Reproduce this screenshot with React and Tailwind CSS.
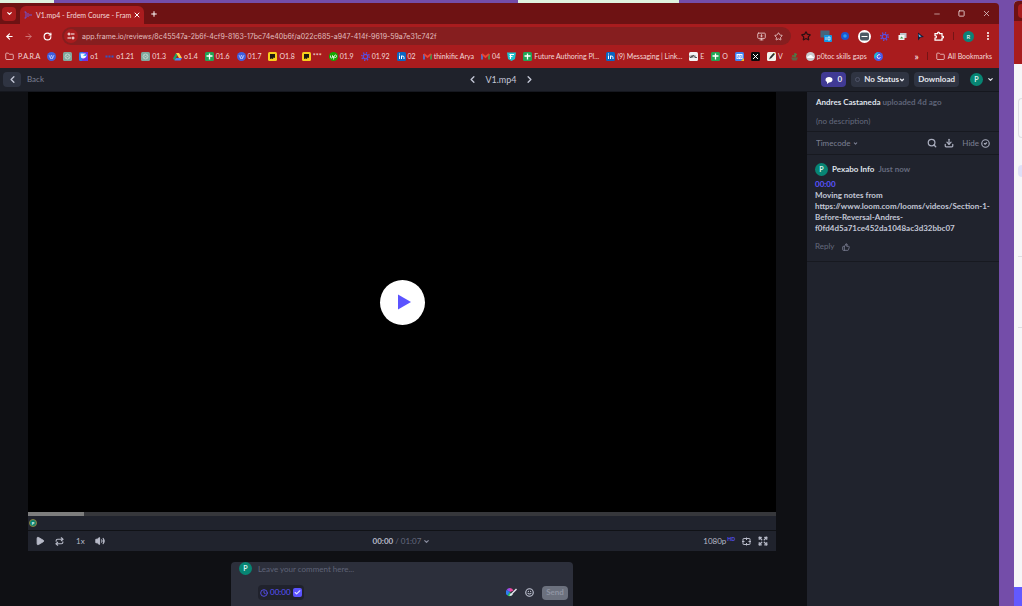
import {
  ArrowLeft,
  ArrowRight,
  Check,
  ChevronDown,
  ChevronLeft,
  ChevronRight,
  CircleCheck,
  Clock,
  Download,
  EllipsisVertical,
  Expand,
  Folder,
  Minus,
  MonitorDown,
  Play,
  Plus,
  Repeat,
  RotateCw,
  Search,
  Smile,
  Square,
  Star,
  ThumbsUp,
  Volume2,
  X,
} from 'lucide-react'

/* ---------- Favicons ---------- */

function Disc({ fill, children }) {
  return (
    <svg viewBox="0 0 18 18" className="size-[9px] shrink-0">
      <circle cx="9" cy="9" r="9" fill={fill} />
      {children}
    </svg>
  )
}

function Tile({ fill, children }) {
  return (
    <svg viewBox="0 0 18 18" className="size-[9px] shrink-0">
      <rect width="18" height="18" rx="3" fill={fill} />
      {children}
    </svg>
  )
}

function WaveDisc() {
  return (
    <Disc fill="#3f5fe0">
      <path d="M4 6l2.5 6L9 6l2.5 6L14 6M6 13h6" stroke="#c9d3ff" strokeWidth="1.4" fill="none" />
    </Disc>
  )
}

function ChatTile() {
  return (
    <Tile fill="#7fa99d">
      <circle cx="9" cy="9" r="5" stroke="#c6d9d3" strokeWidth="1.8" fill="none" />
      <path d="M6 7l6 4M6 11l6-4" stroke="#c6d9d3" strokeWidth="1.2" />
    </Tile>
  )
}

function SheetTile() {
  return (
    <Tile fill="#23a455">
      <path d="M9 3v12M3 8h12" stroke="#fff" strokeWidth="2.6" />
    </Tile>
  )
}

function BrainTile() {
  return (
    <Tile fill="#f7ce1d">
      <path d="M4 4h10v8l-3-1-1 3-3-1-3 1z" fill="#1d1a12" />
    </Tile>
  )
}

function DropTile() {
  return (
    <Tile fill="#2f7bf0">
      <path d="M9 0h9v18H6z" fill="#6b35e8" />
      <path d="M3 3h10q4 4 0 8-5 4-9 0z" fill="#f2f7ff" />
      <path d="M8 7l6-4v5z" fill="#18a4f0" />
    </Tile>
  )
}

function Dots() {
  return (
    <svg viewBox="0 0 18 18" className="size-[9px] shrink-0">
      <path d="M1 9h4M7 9h4M13 9h4" stroke="#3157c4" strokeWidth="4" />
    </svg>
  )
}

function Drive() {
  return (
    <svg viewBox="0 0 18 18" className="size-[9px] shrink-0">
      <path d="M6 2L0 13l3 4L9 6z" fill="#1fa463" />
      <path d="M6 2h6l6 10h-6z" fill="#ffd04b" />
      <path d="M3 17l3-5h12l-3 5z" fill="#4688f4" />
    </svg>
  )
}

function UpDisc() {
  return (
    <Disc fill="#14a800">
      <path d="M3 7v3q0 2 2 2t2-2V7l3 5M9 15l1-6q1-3 3-3t2 2.5-2 2.5-3-2" stroke="#fff" strokeWidth="1.6" fill="none" />
    </Disc>
  )
}

function Gear() {
  return (
    <svg viewBox="0 0 18 18" className="size-[9px] shrink-0">
      <circle cx="9" cy="9" r="4.5" stroke="#5a4fe0" strokeWidth="2.5" fill="none" />
      <circle cx="9" cy="9" r="7.5" stroke="#5a4fe0" strokeWidth="3" strokeDasharray="2.5 3.39" fill="none" />
    </svg>
  )
}

function LinkedIn() {
  return (
    <Tile fill="#0a66c2">
      <path d="M5 7v7M5 3v2M9 14V7M9 11q0-3 2.5-3T14 11v3" stroke="#fff" strokeWidth="2" fill="none" />
    </Tile>
  )
}

function Gmail() {
  return (
    <svg viewBox="0 0 18 18" className="size-[9px] shrink-0">
      <path d="M2 15V4" stroke="#4285f4" strokeWidth="3" />
      <path d="M16 15V4" stroke="#34a853" strokeWidth="3" />
      <path d="M2 4l7 6 7-6" stroke="#ea4335" strokeWidth="3.5" fill="none" />
    </svg>
  )
}

function TealBadge() {
  return (
    <svg viewBox="0 0 18 18" className="size-[9px] shrink-0">
      <path d="M0 1h18l-2 13-7 4-7-4z" fill="#1fc3cf" />
      <path d="M5 5h9M5 9h6M7 5v9" stroke="#fff" strokeWidth="2.2" />
    </svg>
  )
}

function WideTile() {
  return (
    <Tile fill="#f3f3f3">
      <path d="M2 7v4h3V7M7 11V7h3v4M12 7v4h4" stroke="#333" strokeWidth="1.6" fill="none" />
    </Tile>
  )
}

function Calendar() {
  return (
    <Tile fill="#3f83f2">
      <rect x="3" y="4" width="12" height="10" fill="#fff" />
      <path d="M12 18h6v-6z" fill="#f4bd1c" />
      <path d="M5 7h3v2.5H5V12h3M10 7h3v5h-3z" stroke="#3f83f2" strokeWidth="1.2" fill="none" />
    </Tile>
  )
}

function XTile() {
  return (
    <Tile fill="#0b0b0b">
      <path d="M4 4l10 10M14 4L4 14" stroke="#fff" strokeWidth="2" />
    </Tile>
  )
}

function Pencil() {
  return (
    <Tile fill="#f2f2ec">
      <path d="M4 15l2-5 7-8 3 2-7 8z" fill="#2c2c2c" />
      <path d="M13 2l3 2 1-2z" fill="#e5b91c" />
    </Tile>
  )
}

function Plant() {
  return (
    <svg viewBox="0 0 18 18" className="size-[9px] shrink-0">
      <path d="M10 11V2M10 5h4M4 8h8" stroke="#4c7a46" strokeWidth="3" fill="none" />
      <path d="M2 11h14l-3 6H5z" fill="#5f6044" />
    </svg>
  )
}

function Cloud() {
  return (
    <Disc fill="#c9cdd0">
      <path d="M2 12q0-4 4-4 1-3 4-2t3 3q3 0 3 3z" fill="#fff" />
    </Disc>
  )
}

function CanvaDisc() {
  return (
    <Disc fill="#4a5ae8">
      <path d="M9 0a9 9 0 0 0-7 14z" fill="#18bfce" />
      <path d="M12.5 6.5Q11 4 8 6t-1 6q3 2 6-1" stroke="#fff" strokeWidth="1.8" fill="none" />
    </Disc>
  )
}

const BOOKMARKS = [
  { icon: WaveDisc },
  { icon: ChatTile },
  { icon: DropTile, label: 'o1' },
  { icon: Dots, label: 'o1.21' },
  { icon: ChatTile, label: '01.3' },
  { icon: Drive, label: 'o1.4' },
  { icon: SheetTile, label: '01.6' },
  { icon: WaveDisc, label: '01.7' },
  { icon: BrainTile, label: 'O1.8' },
  { icon: BrainTile, label: '***' },
  { icon: UpDisc, label: '01.9' },
  { icon: Gear, label: '01.92' },
  { icon: LinkedIn, label: '02' },
  { icon: Gmail, label: 'thinkific Arya' },
  { icon: Gmail, label: '04' },
  { icon: TealBadge },
  { icon: SheetTile, label: 'Future Authoring Pl...' },
  { icon: LinkedIn, label: '(9) Messaging | Link...' },
  { icon: WideTile, label: 'E' },
  { icon: SheetTile, label: 'O' },
  { icon: Calendar },
  { icon: XTile },
  { icon: Pencil, label: 'V' },
  { icon: Plant },
  { icon: Cloud, label: 'p0toc skills gaps' },
  { icon: CanvaDisc },
]

/* ---------- Browser chrome ---------- */

function TabStrip() {
  return (
    <div className="flex h-[21px] items-center bg-[#6e1213] pl-0.5">
      <button aria-label="Search tabs" className="flex h-3.5 w-3.5 items-center justify-center rounded bg-[#a91c1e] text-white">
        <ChevronDown size={7} strokeWidth={4} />
      </button>
      <div className="ml-1 flex h-[18px] w-[124px] items-center self-end rounded-t-md bg-[#a91c1e] pl-1 text-[#f3d9d9]">
        <svg viewBox="0 0 16 16" className="size-2 shrink-0" fill="none" stroke="#6b55dc" strokeWidth="2">
          <path d="M1 2h3v12H1M8 4v8M12 6v4M15 7v2" />
        </svg>
        <span className="ml-1 w-[95px] whitespace-nowrap">V1.mp4 - Erdem Course - Fram</span>
        <button aria-label="Close tab" className="ml-0.5 text-white">
          <X size={8} strokeWidth={3} />
        </button>
      </div>
      <button aria-label="New tab" className="ml-1.5 text-white">
        <Plus size={8} strokeWidth={3} />
      </button>
      <div className="ml-auto flex items-center gap-[17px] pr-2 text-[#e8d3d3]">
        <button aria-label="Minimize"><Minus size={8} /></button>
        <button aria-label="Restore"><Square size={7} strokeWidth={3} /></button>
        <button aria-label="Close window"><X size={9} /></button>
      </div>
    </div>
  )
}

function Extensions() {
  return (
    <div className="flex items-center gap-[9px] pr-1.5">
      <Star size={10} strokeWidth={3} className="text-[#2b1013]" />
      <svg viewBox="0 0 24 24" className="size-3">
        <rect x="1" y="1" width="18" height="14" fill="#46657a" />
        <rect x="8" y="10" width="16" height="14" rx="2" fill="#1499e6" />
        <path d="M12 14v6M16 14v6h4v-6z" stroke="#fff" strokeWidth="1.5" fill="none" />
      </svg>
      <svg viewBox="0 0 18 18" className="size-2">
        <circle cx="9" cy="9" r="9" fill="#1e55cf" />
        <circle cx="9" cy="9" r="4" fill="#2a9bf0" />
      </svg>
      <svg viewBox="0 0 26 26" className="size-[13px]">
        <circle cx="13" cy="13" r="13" fill="#fff" />
        <rect x="4" y="5" width="18" height="16" rx="4" fill="#4a5964" />
        <path d="M7 13h12" stroke="#fff" strokeWidth="2" />
      </svg>
      <Gear />
      <svg viewBox="0 0 18 18" className="size-[9px]">
        <path d="M4 2h13v10H4z" fill="#bfc3c8" />
        <path d="M1 6h12v10H1z" fill="#f4f4f4" />
        <path d="M4 13l3-4 4 4z" fill="#3f9b55" />
      </svg>
      <svg viewBox="0 0 18 18" className="size-[9px]">
        <path d="M4 1l12 9-7 1-5 6z" fill="#141d36" />
        <path d="M5 4l6 5-5 1z" fill="#6bb7e8" />
      </svg>
      <svg viewBox="0 0 20 20" className="size-2.5" fill="none" stroke="#fff" strokeWidth="2.5">
        <path d="M2 5h5q0-3 2-3t2 3h5v5q3 0 3 2t-3 2v4H2v-4q3 0 3-2.5T2 9z" />
      </svg>
      <span className="h-2 w-px bg-[#741416]" />
      <span className="flex size-[11px] items-center justify-center rounded-full bg-[#0c8277] text-[6px] text-white">R</span>
      <button aria-label="Menu" className="text-white"><EllipsisVertical size={10} strokeWidth={3} /></button>
    </div>
  )
}

function Toolbar() {
  return (
    <div className="flex h-6 items-center bg-[#a91c1e] pl-[5px] text-white">
      <button aria-label="Back in history"><ArrowLeft size={9} strokeWidth={3} /></button>
      <button aria-label="Forward in history" className="ml-2.5 text-[#d07a7b]"><ArrowRight size={9} strokeWidth={2.5} /></button>
      <button aria-label="Reload" className="ml-2.5"><RotateCw size={9} strokeWidth={3} /></button>
      <div className="ml-2.5 flex h-[18px] flex-1 items-center rounded-full bg-[#861e1f] pr-2 pl-0.5">
        <span className="flex size-3.5 shrink-0 items-center justify-center rounded-full bg-[#a91c1e]">
          <svg viewBox="0 0 16 16" className="size-2" fill="none" stroke="#fff" strokeWidth="2">
            <circle cx="4" cy="4" r="2" />
            <path d="M8 4h7M1 12h7" />
            <circle cx="12" cy="12" r="2" />
          </svg>
        </span>
        <input
          aria-label="Address"
          readOnly
          value="app.frame.io/reviews/8c45547a-2b6f-4cf9-8163-17bc74e40b6f/a022c685-a947-414f-9619-59a7e31c742f"
          className="ml-1 h-3 min-w-0 flex-1 bg-transparent font-['Inter',sans-serif] text-[#e2bfbf] outline-none"
        />
        <MonitorDown size={9} strokeWidth={2.5} className="text-[#e2bfbf]" />
        <Star size={9} strokeWidth={2.5} className="ml-2 text-[#e2bfbf]" />
      </div>
      <div className="ml-2.5">
        <Extensions />
      </div>
    </div>
  )
}

function BookmarksBar() {
  return (
    <nav className="flex h-5 items-center bg-[#a91c1e] pr-[7px] pb-1 pl-[5px] text-[#f3d9d9]">
      <div className="flex items-center gap-[7px]">
        <a href="#para" className="flex items-center gap-1 whitespace-nowrap">
          <Folder size={9} />
          P.A.R.A
        </a>
        {BOOKMARKS.map(({ icon: Icon, label }, i) => (
          <a key={i} href={`#bookmark-${i}`} aria-label={label || 'Bookmark'} className="flex items-center gap-0.5 whitespace-nowrap">
            <Icon />
            {label}
          </a>
        ))}
      </div>
      <button aria-label="More bookmarks" className="ml-auto text-[10px] leading-none text-white">»</button>
      <span className="mx-2 h-2 w-px bg-[#741416]" />
      <a href="#all" className="flex items-center gap-[3px] whitespace-nowrap">
        <Folder size={9} />
        All Bookmarks
      </a>
    </nav>
  )
}

/* ---------- Review app ---------- */

function Avatar() {
  return (
    <span className="flex size-[13px] shrink-0 items-center justify-center rounded-full bg-[#078573] text-[7px] font-bold text-[#d9f0ec]">
      P
    </span>
  )
}

function ReviewHeader() {
  return (
    <header className="grid h-6 shrink-0 grid-cols-[1fr_auto_1fr] items-center border-b border-[#15171e] bg-[#1f222b] pl-[3px]">
      <div className="flex items-center gap-1.5 text-[#7c8094]">
        <button aria-label="Go back" className="flex h-[15px] w-[18px] items-center justify-center rounded-sm bg-[#2f3442] text-[#c3c7d6]">
          <ChevronLeft size={11} strokeWidth={3} />
        </button>
        <a href="#back">Back</a>
      </div>
      <div className="flex items-center gap-[7px] text-[#c3c7d6]">
        <button aria-label="Previous asset"><ChevronLeft size={11} strokeWidth={3} /></button>
        <h1 className="text-[9px]">V1.mp4</h1>
        <button aria-label="Next asset"><ChevronRight size={11} strokeWidth={3} /></button>
      </div>
      <div className="flex items-center justify-end gap-[5px] pr-[5px] font-bold text-[#e6e8f0]">
        <button aria-label="Comments" className="flex h-[15px] w-[25px] items-center justify-center gap-1 rounded-sm bg-[#403a94]">
          <svg viewBox="0 0 16 16" className="size-2">
            <path d="M8 2c4 0 7 2 7 5.5S12 13 8 13l-4 3 0-4C2 11 1 9.5 1 7.5 1 4 4 2 8 2z" fill="#fff" />
          </svg>
          0
        </button>
        <label className="flex h-[15px] items-center rounded-sm bg-[#2f3442] px-1">
          <span className="mr-1 size-[5px] rounded-full border border-[#50556a]" />
          <select aria-label="Status" className="appearance-none">
            <option>No Status</option>
          </select>
          <ChevronDown size={6} strokeWidth={5} />
        </label>
        <button className="h-[15px] rounded-sm bg-[#2f3442] px-1">Download</button>
        <button aria-label="Account" className="ml-1.5 flex items-center gap-1">
          <Avatar />
          <ChevronDown size={7} strokeWidth={4} />
        </button>
      </div>
    </header>
  )
}

function Player() {
  return (
    <section className="flex min-h-0 flex-1 flex-col">
      <div className="flex min-h-0 flex-1 items-center justify-center bg-black">
        <button aria-label="Play video" className="flex size-[45px] items-center justify-center rounded-full bg-white">
          <svg viewBox="0 0 14 16" className="ml-1 h-4 w-3.5">
            <path d="M1 0.5l13 7.5-13 7.5z" fill="#5b53ff" />
          </svg>
        </button>
      </div>
      <div className="h-1 bg-[#36373b]">
        <div className="h-full w-14 bg-[#7d7d7d]" />
      </div>
      <div className="flex h-[15px] items-center border-b border-[#101216] bg-[#20232d] px-px">
        <span className="flex size-2 items-center justify-center rounded-full border border-[#8b8040] bg-[#078573] text-[4px] font-bold text-white">P</span>
      </div>
      <div className="grid h-5 grid-cols-[1fr_auto_1fr] items-center bg-[#20232d] pr-2 pl-[7px] text-[#b7bac8]">
        <div className="flex items-center gap-2.5">
          <button aria-label="Play">
            <Play size={10} fill="currentColor" />
          </button>
          <button aria-label="Loop"><Repeat size={9} strokeWidth={3} /></button>
          <select aria-label="Playback speed" className="ml-0.5 appearance-none">
            <option>1x</option>
          </select>
          <button aria-label="Volume"><Volume2 size={10} strokeWidth={2.5} fill="currentColor" /></button>
        </div>
        <button className="flex items-center gap-0.5">
          <span className="font-bold">00:00</span>
          <span className="text-[#656a7e]">/</span>
          <span className="text-[#656a7e]">01:07</span>
          <ChevronDown size={7} strokeWidth={4} className="text-[#8a8ea0]" />
        </button>
        <div className="flex items-center justify-end gap-[7px]">
          <button className="flex items-start">
            1080p<sup className="top-0 pl-px text-[5px] font-bold leading-[7px] text-[#5b53ff]">HD</sup>
          </button>
          <button aria-label="Fit to screen">
            <svg viewBox="0 0 18 18" className="size-[9px]" fill="none" stroke="currentColor" strokeWidth="2">
              <rect x="2" y="3" width="14" height="12" rx="1" />
              <path d="M9 1v5M9 12v5M0 9h5M13 9h5" />
            </svg>
          </button>
          <button aria-label="Full screen"><Expand size={10} strokeWidth={3} /></button>
        </div>
      </div>
    </section>
  )
}

function CommentComposer() {
  return (
    <form className="mx-auto mt-[11px] flex h-11 w-[342px] max-w-full flex-col rounded-t bg-[#2c2f3b] pr-[5px] pl-2">
      <label className="flex items-center gap-1.5">
        <Avatar />
        <input
          aria-label="Comment"
          placeholder="Leave your comment here..."
          className="h-3 flex-1 bg-transparent outline-none placeholder:text-[#5f6377]"
        />
      </label>
      <div className="mt-2.5 flex items-center pl-[19px]">
        <label className="flex h-[15px] items-center gap-0.5 rounded-sm bg-[#20222c] px-0.5 text-[#5b53ff]">
          <Clock size={8} strokeWidth={2.5} />
          00:00
          <span className="grid size-[9px] place-items-center">
            <input type="checkbox" defaultChecked className="col-start-1 row-start-1 size-[9px] appearance-none rounded-xs bg-[#5b53ff]" />
            <Check size={7} strokeWidth={4} className="col-start-1 row-start-1 text-[#dcdcff]" />
          </span>
        </label>
        <button type="button" aria-label="Draw" className="ml-auto">
          <svg viewBox="0 0 22 20" className="h-2.5 w-[11px]">
            <path d="M8 8V0a8 8 0 0 0-7 4z" fill="#a04be8" />
            <path d="M8 8L1 4a8 8 0 0 0 2 11z" fill="#2d7df0" />
            <path d="M8 8V0a8 8 0 0 1 7 5z" fill="#e8489a" />
            <path d="M8 8l-5 7q4 3 8 0z" fill="#2fc46b" />
            <path d="M21 2l-9 9" stroke="#e6e8f0" strokeWidth="3" />
            <path d="M12 10q-4 0-5 6 6 0 7-4z" fill="#e6e8f0" />
          </svg>
        </button>
        <button type="button" aria-label="Emoji" className="ml-2 text-[#c3c7d6]"><Smile size={9} strokeWidth={3} /></button>
        <button type="submit" className="ml-2 h-3.5 w-[26px] rounded-sm bg-[#6c717e] font-bold text-[#8f94a2]">Send</button>
      </div>
    </form>
  )
}

function Sidebar() {
  return (
    <aside className="w-48 shrink-0 bg-[#20232d] text-[#7c8094]">
      <div className="h-10 border-b border-[#171920] px-[9px] pt-[5px]">
        <p>
          <b className="text-[#dfe1ea]">Andres Castaneda</b> <b className="text-[#5f6478]">uploaded 4d ago</b>
        </p>
        <p className="mt-2 text-[#656a7e]">(no description)</p>
      </div>
      <div className="flex h-[23px] items-center border-b border-[#171920] px-[9px]">
        <label className="flex items-center">
          <select aria-label="Sort comments" className="appearance-none">
            <option>Timecode</option>
          </select>
          <ChevronDown size={5} strokeWidth={5} className="ml-0.5" />
        </label>
        <button aria-label="Search comments" className="ml-auto text-[#a9adbd]"><Search size={10} strokeWidth={3} /></button>
        <button aria-label="Export comments" className="ml-[7px] text-[#a9adbd]"><Download size={10} strokeWidth={3} /></button>
        <button className="ml-2 flex items-center gap-0.5">
          Hide <CircleCheck size={9} strokeWidth={3} className="text-[#a9adbd]" />
        </button>
      </div>
      <article className="border-b border-[#171920] px-2 pt-2 pb-[9px]">
        <div className="flex items-center gap-1">
          <Avatar />
          <b className="text-[#dfe1ea]">Pexabo Info</b>
          <b className="text-[#656a7e]">Just now</b>
        </div>
        <p className="mt-[3px] font-bold text-[#5b53ff]">00:00</p>
        <p className="font-bold break-words text-[#c3c7d6]">
          Moving notes from https://www.loom.com/looms/videos/Section-1-Before-Reversal-Andres-f0fd4d5a71ce452da1048ac3d32bbc07
        </p>
        <div className="mt-[7px] flex items-center gap-2">
          <button className="text-[#656a7e]">Reply</button>
          <button aria-label="Like"><ThumbsUp size={8} strokeWidth={2.5} /></button>
        </div>
      </article>
    </aside>
  )
}

function NeighbourWindow() {
  return (
    <div className="mt-px flex w-2 shrink-0 flex-col overflow-hidden rounded-tl bg-[#f6f6f8]">
      <div className="flex h-5 items-center bg-[#6e1213] pl-1">
        <span className="h-3.5 w-1 rounded-l bg-[#a91c1e]" />
      </div>
      <div className="h-[43px] bg-[#a91c1e]" />
      <div className="mt-[34px] ml-1 h-10 rounded-l-md border border-r-0 border-[#dddde2]" />
      <div className="mt-[27px] ml-1 h-3 rounded-l-full bg-[#dfe0f8]" />
      <div className="mt-[79px] ml-1 h-px bg-[#dddde2]" />
      <div className="mt-[70px] ml-1 h-px bg-[#dddde2]" />
      <div className="mt-auto h-[19px] bg-[#6259ff]" />
    </div>
  )
}

export default function App() {
  return (
    <div className="flex h-screen gap-[15px] overflow-hidden bg-[#744da9] font-['Lato',sans-serif] text-[8px] leading-[11px]">
      <div className="flex min-w-0 flex-1 flex-col">
        <div className="flex h-[3px] shrink-0">
          <div className="w-[54px] bg-[#dff3df]" />
          <div className="w-[464px]" />
          <div className="w-[161px] bg-[#dff3df]" />
        </div>
        <div className="flex min-h-0 flex-1 flex-col overflow-hidden rounded-tr">
          <div className="shrink-0 text-[7px] leading-[9px]">
            <TabStrip />
            <Toolbar />
            <BookmarksBar />
          </div>
          <ReviewHeader />
          <div className="flex min-h-0 flex-1">
            <main className="flex min-w-0 flex-1 flex-col bg-[#0f1014] pr-[31px] pl-7">
              <Player />
              <CommentComposer />
            </main>
            <Sidebar />
          </div>
        </div>
      </div>
      <NeighbourWindow />
    </div>
  )
}
